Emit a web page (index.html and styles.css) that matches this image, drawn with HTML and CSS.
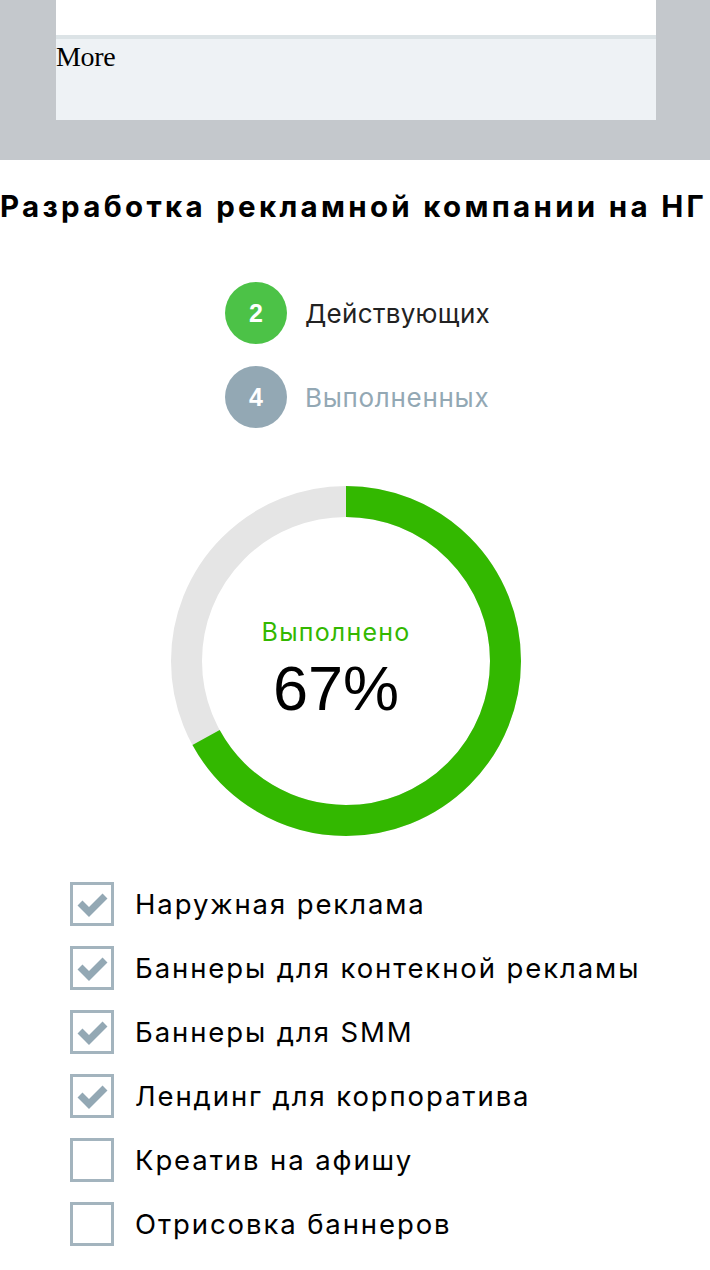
FILE: index.html
```html
<!DOCTYPE html>
<html lang="ru">
<head>
<meta charset="utf-8">
<link rel="stylesheet" href="styles.css">
</head>
<body>
<div class="top">
  <div class="panel">
    <div class="panel-white"></div>
    <div class="panel-more">More</div>
  </div>
</div>
<h1 class="title">Разработка рекламной компании на НГ</h1>
<div class="stats">
  <div class="stat">
    <span class="badge badge-green">2</span>
    <span class="stat-label">Действующих</span>
  </div>
  <div class="stat">
    <span class="badge badge-gray">4</span>
    <span class="stat-label stat-label-gray">Выполненных</span>
  </div>
</div>
<div class="donut">
  <svg class="donut-svg" width="350" height="350" viewBox="0 0 350 350">
    <circle cx="175" cy="175" r="159.5" fill="none" stroke="#e5e5e5" stroke-width="31"/>
    <circle cx="175" cy="175" r="159.5" fill="none" stroke="#33b800" stroke-width="31"
      stroke-dasharray="671.5 1002.2" transform="rotate(-90 175 175)"/>
  </svg>
  <div class="donut-text">
    <div class="donut-label">Выполнено</div>
    <div class="donut-value">67%</div>
  </div>
</div>
<ul class="checklist">
  <li class="item"><span class="box"><svg width="44" height="44" viewBox="0 0 44 44"><polyline points="10,21 19,30 35,14" fill="none" stroke="#93a8b4" stroke-width="7"/></svg></span><span class="item-text">Наружная реклама</span></li>
  <li class="item"><span class="box"><svg width="44" height="44" viewBox="0 0 44 44"><polyline points="10,21 19,30 35,14" fill="none" stroke="#93a8b4" stroke-width="7"/></svg></span><span class="item-text">Баннеры для контекной рекламы</span></li>
  <li class="item"><span class="box"><svg width="44" height="44" viewBox="0 0 44 44"><polyline points="10,21 19,30 35,14" fill="none" stroke="#93a8b4" stroke-width="7"/></svg></span><span class="item-text">Баннеры для SMM</span></li>
  <li class="item"><span class="box"><svg width="44" height="44" viewBox="0 0 44 44"><polyline points="10,21 19,30 35,14" fill="none" stroke="#93a8b4" stroke-width="7"/></svg></span><span class="item-text">Лендинг для корпоратива</span></li>
  <li class="item"><span class="box"></span><span class="item-text">Креатив на афишу</span></li>
  <li class="item"><span class="box"></span><span class="item-text">Отрисовка баннеров</span></li>
</ul>
</body>
</html>
```
FILE: styles.css
```css
html, body {
  margin: 0;
  padding: 0;
  background: #ffffff;
}
body {
  font-family: Inter, "Liberation Sans", Arial, sans-serif;
  color: #000;
  overflow: hidden;
}
.top {
  background: #c4c8cc;
  height: 160px;
  box-sizing: border-box;
  padding: 0 54px 0 56px;
}
.panel-white {
  height: 35px;
  background: #ffffff;
  border-bottom: 4px solid #dce3e6;
}
.panel-more {
  height: 81px;
  background: #eef2f5;
  font-family: "Liberation Serif", "Times New Roman", serif;
  font-size: 28px;
  line-height: 36px;
  padding-top: 0;
  box-sizing: border-box;
  letter-spacing: -0.3px;
}
.title {
  margin: 28px 0 0 0;
  font-size: 29.5px;
  line-height: 36px;
  font-weight: bold;
  white-space: nowrap;
  letter-spacing: 3.3px;
}
.stats {
  margin: 58px 0 0 225px;
  display: flex;
  flex-direction: column;
  gap: 22px;
}
.stat {
  display: flex;
  align-items: center;
  gap: 18px;
}
.badge {
  width: 62px;
  height: 62px;
  border-radius: 50%;
  display: flex;
  align-items: center;
  justify-content: center;
  color: #fff;
  font-weight: bold;
  font-size: 25px;
  font-family: "Liberation Sans", Arial, sans-serif;
}
.badge-green { background: #4cc247; }
.badge-gray { background: #93a8b4; }
.stat-label {
  font-size: 26px;
  color: #222;
  letter-spacing: 0.3px;
}
.stat-label-gray {
  color: #93a8b4;
  letter-spacing: 0.7px;
}
.donut {
  margin: 58px 0 0 171px;
  width: 350px;
  height: 350px;
  position: relative;
}
.donut-svg { display: block; }
.donut-text {
  position: absolute;
  inset: 0;
  display: flex;
  flex-direction: column;
  align-items: center;
  justify-content: center;
  padding: 16px 20px 0 0;
}
.donut-label {
  color: #33b800;
  font-size: 25px;
  line-height: 30px;
  letter-spacing: 1.2px;
}
.donut-value {
  font-family: "Liberation Sans", Arial, sans-serif;
  font-size: 63px;
  line-height: 66px;
  margin-top: 8px;
}
.checklist {
  list-style: none;
  margin: 46px 0 0 70px;
  padding: 0;
  display: flex;
  flex-direction: column;
  gap: 20px;
}
.item {
  display: flex;
  align-items: center;
  gap: 21px;
}
.box {
  width: 44px;
  height: 44px;
  box-sizing: border-box;
  border: 3px solid #a3b4be;
  position: relative;
  flex: none;
}
.box svg {
  position: absolute;
  left: -3px;
  top: -3px;
}
.item-text {
  font-size: 27.5px;
  letter-spacing: 1.9px;
}
```
